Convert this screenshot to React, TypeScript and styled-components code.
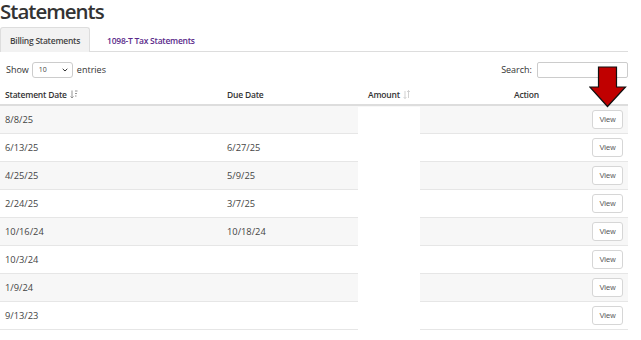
import React from "react";
import styled, { createGlobalStyle } from "styled-components";

const GlobalStyle = createGlobalStyle`
  html, body {
    margin: 0;
    padding: 0;
    background: #fff;
  }
  body {
    font-family: "Open Sans", "Liberation Sans", sans-serif;
    color: #333;
  }
`;

const Page = styled.div`
  width: 641px;
  height: 340px;
  overflow: hidden;
  position: relative;
`;

const Title = styled.h1`
  margin: 0;
  padding-top: 2px;
  font-size: 20.5px;
  line-height: 18px;
  font-weight: 600;
  color: #333;
  letter-spacing: -1px;
`;

const TabBar = styled.div`
  display: flex;
  margin: 7px 13px 0 0;
  border-bottom: 1px solid #ddd;
  height: 24px;
`;

const Tab = styled.div<{ $active?: boolean }>`
  display: flex;
  align-items: center;
  padding: 0 ${(p) => (p.$active ? "9px" : "10px")};
  margin-bottom: -1px;
  font-size: 8.5px;
  font-weight: 600;
  letter-spacing: -0.25px;
  border: 1px solid ${(p) => (p.$active ? "#ddd" : "transparent")};
  border-bottom: none;
  border-radius: 3px 3px 0 0;
  background: ${(p) => (p.$active ? "#f2f2f2" : "transparent")};
  color: ${(p) => (p.$active ? "#444" : "#5a2a8a")};
  margin-right: 6px;
`;

const Controls = styled.div`
  display: flex;
  justify-content: space-between;
  align-items: center;
  margin: 9px 13px 0 6px;
  height: 17px;
  font-size: 9px;
  color: #333;
`;

const Group = styled.label`
  display: flex;
  align-items: center;
  gap: 3px;
`;

const Select = styled.div`
  width: 41px;
  height: 16px;
  border: 1px solid #ccc;
  border-radius: 3px;
  display: flex;
  align-items: center;
  justify-content: space-between;
  padding: 0 4px 0 6px;
  box-sizing: border-box;
  font-size: 7px;
  color: #444;
  margin: 0 1px 0 0;
`;

const SearchInput = styled.div`
  width: 91px;
  height: 16px;
  border: 1px solid #ccc;
  border-radius: 2px;
  box-sizing: border-box;
  margin-left: 2px;
`;

const TableWrap = styled.div`
  position: relative;
  margin: 6px 13px 0 0;
`;

const Table = styled.table`
  width: 100%;
  border-collapse: collapse;
  font-size: 9px;
  table-layout: fixed;
`;

const Th = styled.th<{ $w?: number }>`
  box-sizing: border-box;
  text-align: left;
  font-weight: 600;
  font-size: 8.5px;
  letter-spacing: -0.2px;
  height: 21px;
  padding: 0 5px;
  border-bottom: 2px solid #ddd;
  width: ${(p) => (p.$w ? `${p.$w}px` : "auto")};
  color: #333;
  white-space: nowrap;
`;

const Row = styled.tr<{ $odd?: boolean }>`
  background: ${(p) => (p.$odd ? "#f7f7f7" : "#fff")};
`;

const Td = styled.td<{ $right?: boolean }>`
  height: 27px;
  padding: 0 5px;
  border-bottom: 1px solid #e6e6e6;
  text-align: ${(p) => (p.$right ? "right" : "left")};
  color: #444;
  font-size: 9.3px;
`;

const ViewButton = styled.button`
  font-family: "Liberation Sans", sans-serif;
  font-size: 7.5px;
  color: #555;
  background: #fff;
  border: 1px solid #d6d6d6;
  border-radius: 3px;
  width: 31px;
  height: 19px;
  padding: 0;
  vertical-align: middle;
`;

// white box that hides the amount column in the screenshot
const Redaction = styled.div`
  position: absolute;
  left: 358px;
  top: 23px;
  width: 62px;
  bottom: -20px;
  background: #fff;
`;

// red annotation arrow pointing at the first View button
const Arrow = styled.svg`
  position: absolute;
  left: 589px;
  top: 66px;
`;

const SortIcon = styled.svg`
  margin-left: 3px;
  vertical-align: -1px;
`;

const rows: [string, string][] = [
  ["8/8/25", ""],
  ["6/13/25", "6/27/25"],
  ["4/25/25", "5/9/25"],
  ["2/24/25", "3/7/25"],
  ["10/16/24", "10/18/24"],
  ["10/3/24", ""],
  ["1/9/24", ""],
  ["9/13/23", ""],
];

function SortDesc() {
  return (
    <SortIcon width="8" height="9" viewBox="0 0 8 9">
      <path d="M2 0.5V8M0.5 6.5L2 8L3.5 6.5" stroke="#888" strokeWidth="0.9" fill="none" />
      <path d="M5 1H7.5M5 3.5H7M5 6H6.5" stroke="#888" strokeWidth="0.9" fill="none" />
    </SortIcon>
  );
}

function SortBoth() {
  return (
    <SortIcon width="8" height="9" viewBox="0 0 8 9">
      <path d="M2 1V8.5M0.6 7L2 8.5L3.4 7" stroke="#ccc" strokeWidth="0.9" fill="none" />
      <path d="M5.5 8V0.5M4.1 2L5.5 0.5L6.9 2" stroke="#ccc" strokeWidth="0.9" fill="none" />
    </SortIcon>
  );
}

export default function App() {
  return (
    <Page>
      <GlobalStyle />
      <Title>Statements</Title>
      <TabBar>
        <Tab $active>Billing Statements</Tab>
        <Tab>1098-T Tax Statements</Tab>
      </TabBar>
      <Controls>
        <Group>
          Show
          <Select>
            <span>10</span>
            <svg width="6" height="4" viewBox="0 0 6 4">
              <path d="M0.7 0.8L3 3L5.3 0.8" stroke="#333" strokeWidth="1" fill="none" />
            </svg>
          </Select>
          entries
        </Group>
        <Group>
          Search:
          <SearchInput />
        </Group>
      </Controls>
      <TableWrap>
        <Table>
          <thead>
            <tr>
              <Th $w={222}>
                Statement Date
                <SortDesc />
              </Th>
              <Th $w={141}>Due Date</Th>
              <Th $w={146}>
                Amount
                <SortBoth />
              </Th>
              <Th>Action</Th>
            </tr>
          </thead>
          <tbody>
            {rows.map(([d, due], i) => (
              <Row key={d} $odd={i % 2 === 0}>
                <Td>{d}</Td>
                <Td>{due}</Td>
                <Td />
                <Td $right>
                  <ViewButton>View</ViewButton>
                </Td>
              </Row>
            ))}
          </tbody>
        </Table>
        <Redaction />
      </TableWrap>
      <Arrow width="38" height="42" viewBox="0 0 38 42">
        <path
          d="M9.5 1H27.5V21H36.5L18.5 40.5L0.8 21H9.5Z"
          fill="#c00000"
          stroke="#111"
          strokeWidth="1.2"
          strokeLinejoin="miter"
        />
      </Arrow>
    </Page>
  );
}
